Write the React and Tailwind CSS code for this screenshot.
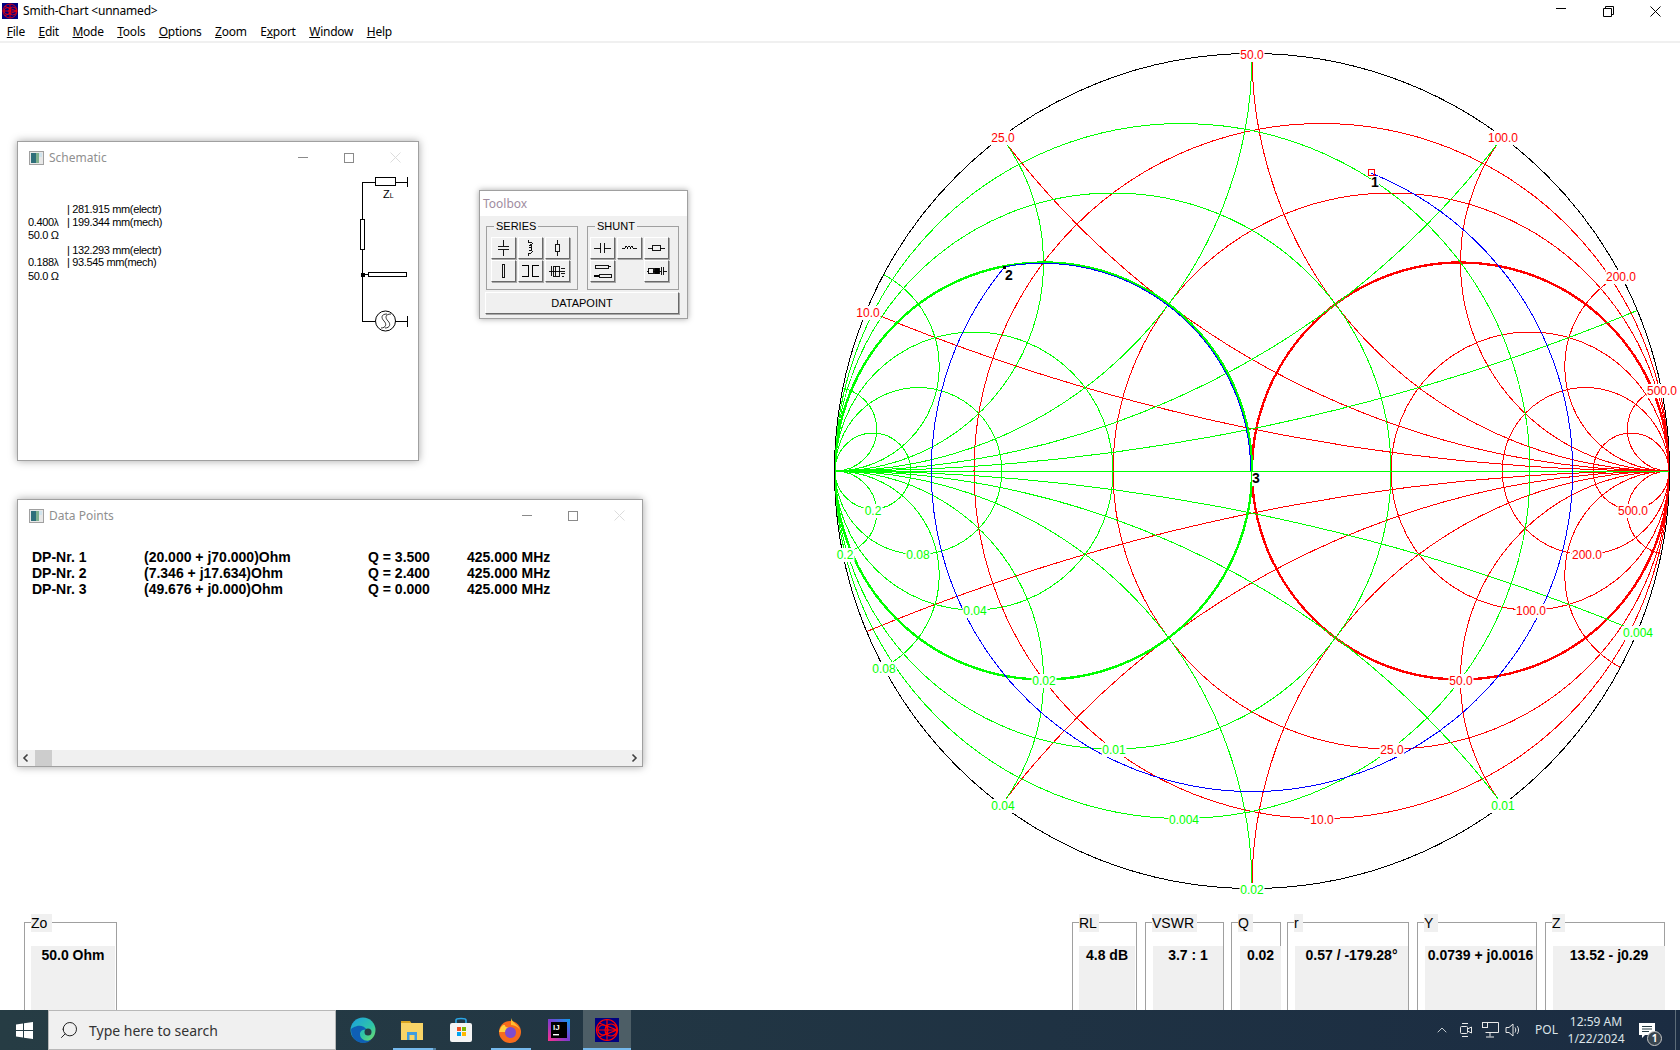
import { ChevronUp, Search } from 'lucide-react'

const CX = 1252
const CY = 471
const R = 417
const px = (g) => CX + g * R
const py = (g) => CY - g * R

const VALUES = [0.2, 0.5, 2, 4, 10]
const RED = '#ff0000'
const GREEN = '#00ff00'

const redLabels = [
  ['50.0', 1251, 54], ['25.0', 1002, 137], ['100.0', 1502, 137], ['10.0', 867, 312],
  ['200.0', 1620, 276], ['500.0', 1661, 390], ['500.0', 1632, 510], ['200.0', 1586, 554],
  ['100.0', 1530, 610], ['50.0', 1460, 680], ['25.0', 1391, 749], ['10.0', 1321, 819],
]
const greenLabels = [
  ['0.2', 872, 510], ['0.2', 844, 554], ['0.08', 917, 554], ['0.04', 974, 610],
  ['0.02', 1043, 680], ['0.01', 1113, 749], ['0.004', 1183, 819], ['0.02', 1251, 889],
  ['0.04', 1002, 805], ['0.08', 883, 668], ['0.01', 1502, 805], ['0.004', 1637, 632],
]
const points = [
  ['1', 1374, 182], ['2', 1008, 275], ['3', 1255, 478],
]

const menus = [
  ['F', 'ile'], ['E', 'dit'], ['M', 'ode'], ['T', 'ools'], ['O', 'ptions'], ['Z', 'oom'],
  ['E', 'x', 'port'], ['W', 'indow'], ['H', 'elp'],
]

const dataRows = [
  ['DP-Nr. 1', '(20.000 + j70.000)Ohm', 'Q = 3.500', '425.000 MHz'],
  ['DP-Nr. 2', '(7.346 + j17.634)Ohm', 'Q = 2.400', '425.000 MHz'],
  ['DP-Nr. 3', '(49.676 + j0.000)Ohm', 'Q = 0.000', '425.000 MHz'],
]

function Label({ text, x, y, color, bold }) {
  const w = text.length * (bold ? 7 : 6) + 1
  return (
    <g>
      <rect x={x + 1 - w / 2} y={y - 6} width={w} height={14} fill="#fff" />
      <text x={x + 1} y={y + 5} textAnchor="middle" fontSize={bold ? 14 : 12} fontWeight={bold ? 700 : 400} fontFamily="'Liberation Sans', sans-serif" fill={color}>
        {text}
      </text>
    </g>
  )
}

function SmithChart() {
  const a1 = [0.2857, 0.7143]
  const a2 = [-0.593, 0.49]
  const blue = `M${px(a1[0])} ${py(a1[1])} A${0.769 * R} ${0.769 * R} 0 1 1 ${px(a2[0])} ${py(a2[1])} A${R / 2} ${R / 2} 0 0 1 ${px(-0.003)} ${py(0)}`
  return (
    <svg viewBox="830 43 850 857" className="h-[857px] w-[850px] shrink-0">
      <defs>
        <clipPath id="unit"><circle cx={CX} cy={CY} r={R} /></clipPath>
      </defs>
      <g fill="none" shapeRendering="crispEdges">
        <circle cx={CX} cy={CY} r={R + 0.5} stroke="#000" />
        <g clipPath="url(#unit)">
          <g stroke={RED}>
            {VALUES.map((v) => (
              <circle key={v} cx={px(v / (v + 1))} cy={CY} r={R / (v + 1)} />
            ))}
            {[...VALUES, 1].flatMap((v) => [
              <circle key={`a${v}`} cx={px(1)} cy={py(1 / v)} r={R / v} />,
              <circle key={`b${v}`} cx={px(1)} cy={py(-1 / v)} r={R / v} />,
            ])}
            <circle cx={px(0.5)} cy={CY} r={R / 2} strokeWidth="2.4" />
          </g>
          <g stroke={GREEN}>
            {VALUES.map((v) => (
              <circle key={v} cx={px(-v / (v + 1))} cy={CY} r={R / (v + 1)} />
            ))}
            {[...VALUES, 1].flatMap((v) => [
              <circle key={`a${v}`} cx={px(-1)} cy={py(1 / v)} r={R / v} />,
              <circle key={`b${v}`} cx={px(-1)} cy={py(-1 / v)} r={R / v} />,
            ])}
            <line x1={px(-1)} y1={CY} x2={px(1)} y2={CY} />
            <circle cx={px(-0.5)} cy={CY} r={R / 2} strokeWidth="2.4" />
          </g>
        </g>
        <path d={blue} stroke="#0000ff" />
      </g>
      {redLabels.map(([t, x, y], i) => <Label key={i} text={t} x={x} y={y} color={RED} />)}
      {greenLabels.map(([t, x, y], i) => <Label key={i} text={t} x={x} y={y} color={GREEN} />)}
      {points.map(([t, x, y]) => <Label key={t} text={t} x={x} y={y} color="#000" bold />)}
      <rect x="1368.5" y="169.5" width="6" height="6" fill="none" stroke={RED} shapeRendering="crispEdges" />
      <rect x="1003" y="266" width="3" height="3" fill="#000" />
    </svg>
  )
}

function AppIcon({ size }) {
  return (
    <svg width={size} height={size} viewBox="0 0 24 24">
      <rect width="24" height="24" fill="#000080" />
      <g fill="none" stroke="#ff0000" strokeWidth="1.2">
        <circle cx="12" cy="12" r="10.5" />
        <circle cx="16" cy="12" r="6" />
        <circle cx="8" cy="12" r="5" />
        <path d="M1 12H23M4 5L22 12L4 19M12 2V22" />
      </g>
    </svg>
  )
}

function MdiIcon() {
  return (
    <svg width="15" height="14" viewBox="0 0 15 14" className="shrink-0">
      <rect x="0.5" y="0.5" width="14" height="13" fill="#e8e8e8" stroke="#a0a0a0" />
      <rect x="2" y="2" width="5" height="10" fill="#2f6f7a" />
      <rect x="7" y="2" width="3" height="10" fill="#7fb08f" />
      <rect x="10" y="2" width="3" height="4" fill="#d0e4ee" />
    </svg>
  )
}

function WinControls({ gap }) {
  return (
    <div className={`ml-auto flex items-center ${gap}`}>
      <div className="h-px w-[10px] bg-[#8a8a8a]" />
      <div className="h-[10px] w-[10px] border border-[#8a8a8a]" />
      <svg width="11" height="11" viewBox="0 0 11 11"><path d="M0.5 0.5L10.5 10.5M10.5 0.5L0.5 10.5" stroke="#dcdcdc" /></svg>
    </div>
  )
}

function MdiTitle({ title, gap }) {
  return (
    <div className="flex h-[31px] items-center pl-[11px] pr-[17px] text-[12px] text-[#8f8f8f]">
      <MdiIcon />
      <span className="ml-[5px]">{title}</span>
      <WinControls gap={gap} />
    </div>
  )
}

function SchematicDrawing() {
  return (
    <svg viewBox="355 170 60 165" className="absolute left-[337px] top-[28px] h-[165px] w-[60px]" fill="none" stroke="#000" shapeRendering="crispEdges">
      <path d="M362.5 182H375M396 182H407M407.5 177V187M362.5 182V219M362.5 249V321H375M395 321H407M407.5 316V327M362.5 274H368" />
      <rect x="375.5" y="177.5" width="20" height="8" />
      <rect x="360.5" y="219.5" width="4" height="30" />
      <rect x="368.5" y="272.5" width="38" height="4" />
      <rect x="361" y="273" width="3" height="3" fill="#000" />
      <g shapeRendering="auto">
        <circle cx="385.5" cy="321" r="10" />
        <path d="M387 314C381 314 381 318 384 321C387 324 386 328 381 328M391 314C385 314 385 318 388 321C391 324 390 328 385 328" strokeWidth="0.8" />
      </g>
    </svg>
  )
}

function SchematicBlock({ electr, lambda, mech }) {
  return (
    <div className="leading-[12.5px]">
      <div className="pl-[39px]">| {electr} mm(electr)</div>
      <div className="flex">
        <span className="w-[39px]">{lambda}<span className="text-[10px]">λ</span></span>
        <span>| {mech} mm(mech)</span>
      </div>
      <div>50.0 Ω</div>
    </div>
  )
}

function Schematic() {
  return (
    <div className="absolute left-[17px] top-[98px] h-[320px] w-[402px] border border-[#a0a0a0] bg-white shadow-[0_0_8px_rgba(0,0,0,0.35)]">
      <MdiTitle title="Schematic" gap="gap-[36px]" />
      <SchematicDrawing />
      <div className="flex flex-col gap-[2px] pl-[10px] pt-[30px] font-['Liberation_Sans'] text-[11px] tracking-[-0.35px] text-black">
        <SchematicBlock electr="281.915" lambda="0.400" mech="199.344" />
        <SchematicBlock electr="132.293" lambda="0.188" mech="93.545" />
      </div>
      <span className="absolute left-[365px] top-[47px] font-['Liberation_Sans'] text-[11px] leading-none">Z<span className="text-[7px]">L</span></span>
    </div>
  )
}

function DataPoints() {
  return (
    <div className="absolute left-[17px] top-[456px] flex h-[268px] w-[626px] flex-col border border-[#a0a0a0] bg-white shadow-[0_0_8px_rgba(0,0,0,0.35)]">
      <MdiTitle title="Data Points" gap="gap-[36px]" />
      <div className="flex-1 pl-[14px] pt-[18px] font-['Liberation_Sans'] text-[14px] font-bold leading-[16px] text-black">
        {dataRows.map((row) => (
          <div key={row[0]} className="grid grid-cols-[112px_224px_99px_1fr]">
            {row.map((c) => <span key={c}>{c}</span>)}
          </div>
        ))}
      </div>
      <div className="flex h-[16px] items-center bg-[#f0f0f0] text-[#404040]">
        <svg width="17" height="16" viewBox="0 0 17 16" className="shrink-0"><path d="M9.5 4.5L6 8L9.5 11.5" fill="none" stroke="#404040" strokeWidth="1.6" /></svg>
        <div className="h-full w-[17px] bg-[#cdcdcd]" />
        <svg width="17" height="16" viewBox="0 0 17 16" className="ml-auto shrink-0"><path d="M7.5 4.5L11 8L7.5 11.5" fill="none" stroke="#404040" strokeWidth="1.6" /></svg>
      </div>
    </div>
  )
}

const seriesIcons = [
  <path d="M12 2V9M6 9H18M6 13H18M12 13V20" />,
  <path d="M10 2V5C15 4 15 8 10 8C15 7 15 11 10 11C15 10 15 14 10 14C15 13 15 17 10 17V20" />,
  <><path d="M12 2V7M12 15V20" /><rect x="10" y="7" width="4" height="8" /></>,
  <rect x="10.5" y="3.5" width="3" height="15" />,
  <path d="M3 5H10V17H3M21 5H14V17H21" strokeWidth="1.5" />,
  <><rect x="7.5" y="5.5" width="7" height="11" /><path d="M5 5V17M10 5V17M3 11H20M16 8H20M16 14H20M17 16.5H19" /></>,
]

const shuntIcons = [
  <path d="M3 11H10M10 6V16M14 6V16M14 11H21" />,
  <path d="M4 12H7C7 8 10 8 10 12C10 8 13 8 13 12C13 8 16 8 16 12H20" />,
  <><path d="M3 11H8M16 11H21" /><rect x="8" y="8" width="8" height="6" /></>,
  <><rect x="4.5" y="4.5" width="14" height="4" /><path d="M18 6.5H21" /><rect x="8.5" y="14.5" width="13" height="4" /><path d="M3 16.5H8" strokeWidth="1.4" /></>,
  null,
  <><path d="M1 11H4M8 11H10M15 11H17M19 11H23M17.5 7V15M19.5 7V15" /><rect x="3.5" y="8.5" width="5" height="5" /><rect x="10" y="8" width="5" height="6" fill="#000" /></>,
]

function ToolButton({ icon }) {
  if (!icon) return <div />
  return (
    <div className="h-[22px] w-[25px] border border-b-[#696969] border-l-white border-r-[#696969] border-t-white bg-[#f0f0f0] shadow-[1px_1px_0_#a8a8a8]">
      <svg width="23" height="20" viewBox="0 0 24 22" fill="none" stroke="#000" strokeWidth="1" shapeRendering="crispEdges">
        {icon}
      </svg>
    </div>
  )
}

function ToolGroup({ title, icons, left }) {
  return (
    <div className={`relative h-[64px] w-[92px] border border-[#a0a0a0] pt-[10px] ${left}`}>
      <span className="absolute -top-[7px] left-[7px] bg-[#f0f0f0] px-[2px] font-['Liberation_Sans'] text-[11px] leading-[13px] text-black">{title}</span>
      <div className="grid grid-cols-[25px_25px_25px] gap-x-[2px] gap-y-[1px]">
        {icons.map((ic, i) => <ToolButton key={i} icon={ic} />)}
      </div>
    </div>
  )
}

function Toolbox() {
  return (
    <div className="absolute left-[479px] top-[147px] h-[129px] w-[209px] border border-[#a0a0a0] bg-[#f0f0f0] shadow-[0_0_6px_rgba(0,0,0,0.35)]">
      <div className="flex h-[25px] items-center bg-white pl-[3px] text-[12px] text-[#a08ca0]">Toolbox</div>
      <div className="flex gap-[9px] pl-[6px] pt-[10px]">
        <ToolGroup title="SERIES" icons={seriesIcons} left="pl-[4px]" />
        <ToolGroup title="SHUNT" icons={shuntIcons} left="pl-[2px]" />
      </div>
      <div className="ml-[5px] mt-[2px] flex h-[22px] w-[194px] items-center justify-center border border-b-[#696969] border-l-white border-r-[#696969] border-t-white font-['Liberation_Sans'] text-[11px] text-black shadow-[1px_1px_0_#a8a8a8]">
        DATAPOINT
      </div>
    </div>
  )
}

function Readout({ label, value, width, labelWidth, valueLeft, valueRight, offset = '' }) {
  return (
    <div className={`relative mt-[8px] h-[88px] border border-b-0 border-[#a0a0a0] ${width} ${offset}`}>
      <span className={`absolute left-[6px] -top-[9px] h-[18px] bg-[#f0f0f0] font-['Liberation_Sans'] text-[14px] leading-[18px] text-black ${labelWidth}`}>{label}</span>
      <div className={`absolute bottom-0 top-[23px] bg-[#f0f0f0] pt-[1px] text-center font-['Liberation_Sans'] text-[14px] font-bold leading-[16px] text-black ${valueLeft} ${valueRight}`}>
        {value}
      </div>
    </div>
  )
}

function TaskIcon({ children, underline }) {
  return (
    <div className="relative flex w-[49px] items-center justify-center">
      {children}
      {underline && <div className="absolute bottom-0 left-[6px] h-[2px] w-[40px] bg-[#76b9ed]" />}
    </div>
  )
}

function Taskbar() {
  return (
    <div className="flex h-[40px] shrink-0 items-stretch bg-linear-to-r from-[#263c44] to-[#1b2c42] text-white">
      <div className="flex w-[48px] items-center justify-center">
        <svg width="17" height="17" viewBox="0 0 17 17" fill="#fff"><path d="M0 2.5L7 1.4V8H0ZM8 1.3L17 0V8H8ZM0 9H7V15.6L0 14.5ZM8 9H17V17L8 15.7Z" /></svg>
      </div>
      <div className="flex w-[288px] items-center border border-[#b8b8b8] bg-[#f0f0f0] pl-[10px] font-['Noto_Sans'] text-[14px] text-[#333]">
        <Search size={20} strokeWidth={1.2} className="-scale-x-100 text-[#222]" />
        <span className="ml-[10px]">Type here to search</span>
      </div>
      <div className="ml-[2px] flex h-full">
        <TaskIcon>
          <svg width="26" height="26" viewBox="0 0 26 26">
            <defs>
              <linearGradient id="edge" x1="0" y1="0" x2="1" y2="1">
                <stop offset="0" stopColor="#1b9de2" /><stop offset="0.6" stopColor="#2fc5a6" /><stop offset="1" stopColor="#7fe060" />
              </linearGradient>
            </defs>
            <circle cx="13" cy="13" r="12.5" fill="url(#edge)" />
            <path d="M1 13C1 21 7 26 13 26C17 26 19 25 21 23C15 25 10 22 10 17C10 13 14 12 17 13C15 9 10 8 7 9C4 10 1 11 1 13Z" fill="#0f5fb5" />
            <circle cx="18" cy="15" r="3.5" fill="#263c44" />
          </svg>
        </TaskIcon>
        <TaskIcon underline>
          <svg width="24" height="24" viewBox="0 0 24 24">
            <path d="M1 3H10L12 6H1Z" fill="#d9a520" />
            <rect x="1" y="5" width="22" height="17" fill="#f8d467" />
            <path d="M7 22V14H17V22H14.5V17H9.5V22Z" fill="#3f9de0" />
          </svg>
          <div className="absolute bottom-0 left-[46px] h-[2px] w-[3px] bg-[#4f7f9f]" />
        </TaskIcon>
        <TaskIcon>
          <svg width="24" height="26" viewBox="0 0 24 26">
            <path d="M7 6V3C7 1 17 1 17 3V6" fill="none" stroke="#2ba7e8" strokeWidth="1.6" />
            <rect x="1" y="6" width="22" height="19" rx="2" fill="#f4f4f4" />
            <rect x="8" y="10" width="4" height="4" fill="#f25022" /><rect x="13" y="10" width="4" height="4" fill="#7fba00" />
            <rect x="8" y="15" width="4" height="4" fill="#00a4ef" /><rect x="13" y="15" width="4" height="4" fill="#ffb900" />
          </svg>
        </TaskIcon>
        <TaskIcon underline>
          <svg width="24" height="26" viewBox="0 0 24 26">
            <circle cx="12" cy="15" r="11" fill="#f76b1c" />
            <path d="M13 1C14 6 22 8 23 16C23 12 18 8 13 8Z" fill="#ffbd2e" />
            <path d="M1 15C3 8 5 8 7 8C6 11 12 10 13 13L8 15Z" fill="#ffd23f" />
            <circle cx="12.5" cy="15.5" r="5.5" fill="#7d4ccf" />
          </svg>
        </TaskIcon>
        <TaskIcon>
          <svg width="22" height="22" viewBox="0 0 22 22">
            <defs>
              <linearGradient id="ij" x1="0" y1="1" x2="1" y2="0">
                <stop offset="0" stopColor="#ff318c" /><stop offset="0.5" stopColor="#7c3bd0" /><stop offset="1" stopColor="#08a0f0" />
              </linearGradient>
            </defs>
            <rect width="22" height="22" fill="url(#ij)" />
            <rect x="3" y="3" width="16" height="16" fill="#000" />
            <text x="5" y="11" fontSize="8" fontWeight="700" fill="#fff" fontFamily="'Liberation Sans', sans-serif">IJ</text>
            <rect x="5" y="15" width="6" height="1.4" fill="#fff" />
          </svg>
        </TaskIcon>
        <div className="relative flex w-[48px] items-center justify-center bg-[#4d5e66]">
          <AppIcon size={24} />
          <div className="absolute bottom-0 left-0 h-[2px] w-full bg-[#76b9ed]" />
        </div>
      </div>
      <div className="ml-auto flex items-center font-['Noto_Sans'] text-[12px] text-[#dde4e8]">
        <ChevronUp size={16} strokeWidth={1.3} className="mr-[9px]" />
        <svg width="14" height="18" viewBox="0 0 14 18" fill="none" stroke="#e8e8e8" className="mr-[9px]">
          <rect x="1.5" y="5.5" width="7" height="7" rx="1" /><path d="M8.5 8L12.5 6V12L8.5 10M3 2.5H9M3 15.5H9" />
        </svg>
        <svg width="17" height="16" viewBox="0 0 17 16" fill="none" stroke="#e8e8e8" className="mr-[6px]">
          <path d="M3.5 0.5H16.5V10.5H3.5M8 10.5V14.5M4 15H12" /><rect x="0.5" y="0.5" width="5" height="5" />
        </svg>
        <svg width="17" height="16" viewBox="0 0 17 16" fill="none" stroke="#e8e8e8" className="mr-[13px]">
          <path d="M1 5.5H4L8 2V14L4 10.5H1ZM10 5.5C11 7 11 9 10 10.5M12 4C14 6 14 10 12 12" />
        </svg>
        <span className="w-[22px]">POL</span>
        <div className="ml-[12px] flex w-[54px] flex-col items-center leading-[17px]">
          <span>12:59 AM</span>
          <span>1/22/2024</span>
        </div>
        <div className="relative ml-[16px] mr-[20px]">
          <svg width="16" height="15" viewBox="0 0 16 15">
            <path d="M0 0H16V12H6L3 15V12H0Z" fill="#fff" /><path d="M3 3.5H13M3 6H13M3 8.5H10" stroke="#263c44" />
          </svg>
          <span className="absolute -bottom-[8px] -right-[7px] flex h-[15px] w-[15px] items-center justify-center rounded-full border border-[#c8c8c8] bg-[#3a4650] text-[10px] font-bold leading-none text-white">1</span>
        </div>
        <div className="h-full w-px bg-[#5d6c78]" />
        <div className="w-[4px]" />
      </div>
    </div>
  )
}

export default function App() {
  return (
    <div className="flex h-[1050px] w-[1680px] flex-col overflow-hidden bg-white font-['Noto_Sans',sans-serif]">
      <div className="flex h-[22px] shrink-0 items-center pl-[2px] pr-[1px] text-[12px] tracking-[-0.2px] text-black">
        <AppIcon size={16} />
        <span className="ml-[5px]">Smith-Chart &lt;unnamed&gt;</span>
        <div className="ml-auto flex">
          <div className="flex w-[49px] justify-center"><div className="mt-[2px] h-px w-[10px] bg-black" /></div>
          <div className="flex w-[47px] justify-center">
            <svg width="11" height="11" viewBox="0 0 11 11" fill="none" stroke="#000"><path d="M2.5 2.5V0.5H10.5V8.5H8.5M0.5 2.5H8.5V10.5H0.5Z" /></svg>
          </div>
          <div className="flex w-[47px] justify-center">
            <svg width="11" height="11" viewBox="0 0 11 11"><path d="M0.5 0.5L10.5 10.5M10.5 0.5L0.5 10.5" stroke="#000" /></svg>
          </div>
        </div>
      </div>
      <div className="flex h-[19px] shrink-0 items-center text-[12px] tracking-[-0.25px] text-black">
        {menus.map((m, i) => (
          <span key={i} className="px-[6.75px]">
            {m.length === 3 ? <>{m[0]}<u>{m[1]}</u>{m[2]}</> : <><u>{m[0]}</u>{m[1]}</>}
          </span>
        ))}
      </div>
      <div className="h-[2px] shrink-0 bg-[#f0f0f0]" />
      <main className="relative flex min-h-0 flex-1 flex-col overflow-hidden">
        <div className="flex h-[871px] shrink-0 justify-end">
          <SmithChart />
        </div>
        <div className="flex h-[96px] shrink-0 justify-between pl-[24px] pr-[15px]">
          <Readout label="Zo" value="50.0 Ohm" width="w-[93px]" labelWidth="w-[21px]" valueLeft="left-[6px]" valueRight="right-[1px]" />
          <div className="flex gap-[8px]">
            <Readout label="RL" value="4.8 dB" width="w-[65px]" labelWidth="w-[20px]" valueLeft="left-[6px]" valueRight="right-[1px]" />
            <Readout label="VSWR" value="3.7 : 1" width="w-[79px]" labelWidth="w-[45px]" valueLeft="left-[7px]" valueRight="right-[0px]" />
            <Readout label="Q" value="0.02" width="w-[50px]" labelWidth="w-[15px]" valueLeft="left-[8px]" valueRight="-right-[1px]" offset="-ml-[1px]" />
            <Readout label="r" value="0.57 / -179.28°" width="w-[122px]" labelWidth="w-[9px]" valueLeft="left-[7px]" valueRight="right-[0px]" offset="-ml-[2px]" />
            <Readout label="Y" value="0.0739 + j0.0016" width="w-[120px]" labelWidth="w-[14px]" valueLeft="left-[7px]" valueRight="right-[0px]" />
            <Readout label="Z" value="13.52 - j0.29" width="w-[120px]" labelWidth="w-[13px]" valueLeft="left-[7px]" valueRight="-right-[1px]" />
          </div>
        </div>
        <Schematic />
        <Toolbox />
        <DataPoints />
      </main>
      <Taskbar />
    </div>
  )
}
